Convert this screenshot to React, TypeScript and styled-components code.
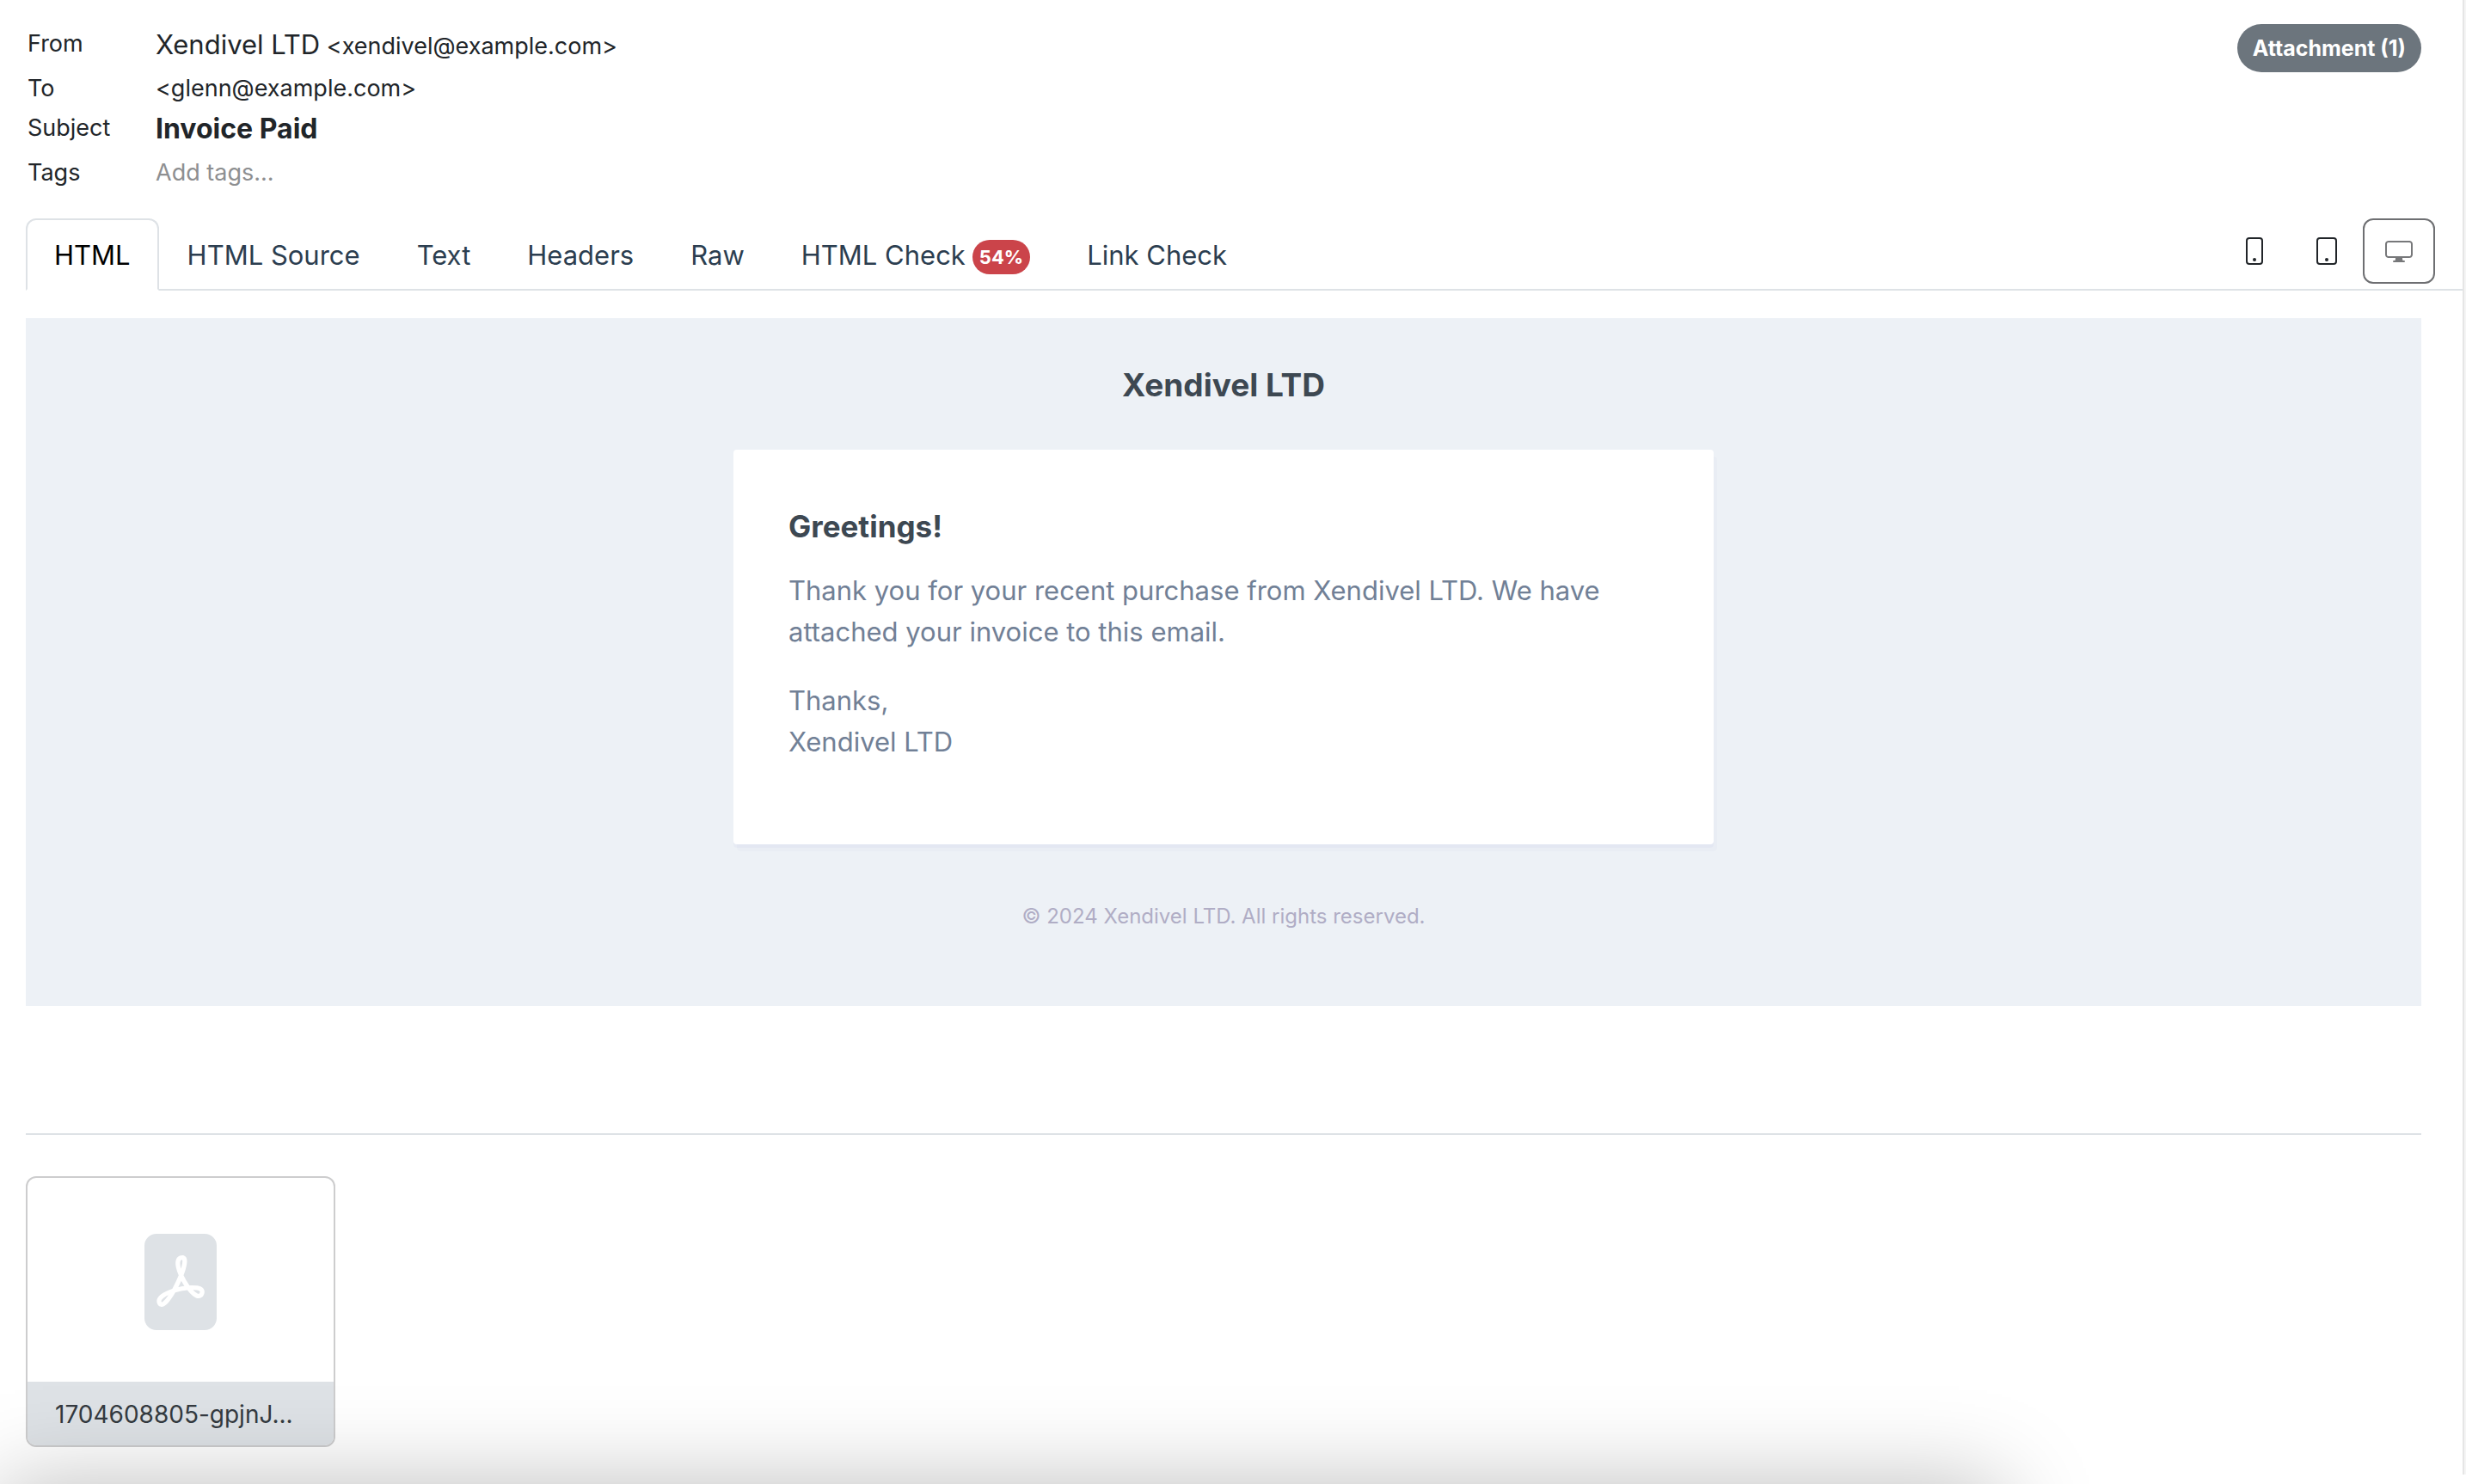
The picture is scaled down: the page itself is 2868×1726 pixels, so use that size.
import React from "react";
import styled, { createGlobalStyle } from "styled-components";
import { BsDisplay, BsFilePdfFill, BsPhone, BsTablet } from "react-icons/bs";

const GlobalStyle = createGlobalStyle`
  *, *::before, *::after { box-sizing: border-box; }
  body {
    margin: 0;
    background: #fff;
    color: #212529;
    font-family: Inter, "Liberation Sans", sans-serif;
    font-size: 27px;
    line-height: 42px;
    overflow: hidden;
  }
`;

const Page = styled.main`
  min-height: 1715px;
  padding: 28px 0 0 30px;
  border-right: 2px solid #e6e6e6;
  margin-right: 2px;
  box-shadow: 2px 0 0 #f5f5f5;
`;

const Inset = styled.div`
  margin-right: 48px;
`;

const Header = styled(Inset)`
  display: flex;
  justify-content: space-between;
  align-items: flex-start;
`;

const Details = styled.table`
  border-collapse: collapse;
  margin: 2px 0 28px;

  th, td {
    padding: 0;
    vertical-align: top;
    text-align: left;
  }
  th {
    width: 151px;
    padding-left: 2px;
    font-weight: 400;
  }
`;

const DetailRow = styled.tr<{ $height: number; $large?: boolean }>`
  height: ${(p) => p.$height}px;

  td { line-height: ${(p) => (p.$large ? 44 : 42)}px; }
`;

const SenderName = styled.span`
  font-size: 31px;
`;

const Subject = styled.strong`
  font-size: 32px;
  font-weight: 700;
`;

const TagInput = styled.input`
  display: block;
  width: 400px;
  height: 42px;
  padding: 0;
  border: 0;
  outline: 0;
  background: transparent;
  font: inherit;
  &::placeholder { color: #8e8f91; opacity: 1; }
`;

const AttachmentBadge = styled.button`
  height: 56px;
  padding: 0 18px;
  border: 0;
  border-radius: 28px;
  background: #6c757d;
  color: #fff;
  font: 700 25px/56px Inter, sans-serif;
`;

const TabBar = styled.nav`
  display: flex;
  justify-content: space-between;
  border-bottom: 2px solid #dee2e6;
`;

const TabList = styled.div`
  display: flex;
  margin-bottom: -2px;
`;

const Tab = styled.button<{ $active?: boolean }>`
  display: flex;
  align-items: center;
  gap: 8px;
  height: 84px;
  padding: 2px 31px 0;
  border: 2px solid ${(p) => (p.$active ? "#dee2e6" : "transparent")};
  border-bottom-color: ${(p) => (p.$active ? "#fff" : "transparent")};
  border-radius: 12px 12px 0 0;
  background: ${(p) => (p.$active ? "#fff" : "transparent")};
  color: ${(p) => (p.$active ? "#000" : "#2c3e50")};
  font: 400 31px/48px Inter, sans-serif;
`;

const ScoreBadge = styled.span`
  height: 40px;
  padding: 0 8px;
  margin-top: 4px;
  border-radius: 20px;
  background: #cb444a;
  color: #fff;
  font: 700 22px/40px Inter, sans-serif;
`;

const Devices = styled.div`
  display: flex;
  margin-right: 32px;
`;

const DeviceButton = styled.button<{ $active?: boolean }>`
  display: flex;
  align-items: center;
  justify-content: center;
  width: 84px;
  height: 76px;
  padding: 0;
  border: 2px solid ${(p) => (p.$active ? "#6e6f72" : "transparent")};
  border-radius: 12px;
  background: transparent;
  color: ${(p) => (p.$active ? "#77787a" : "#212529")};
  font-size: 32px;
`;

const Mail = styled(Inset)`
  display: flex;
  flex-direction: column;
  align-items: center;
  margin-top: 32px;
  background: #edf1f6;
`;

const MailTitle = styled.h1`
  margin: 50px 0 47px;
  color: #3d4852;
  font-size: 37px;
  line-height: 56px;
`;

const MailCard = styled.article`
  width: 1140px;
  max-width: 100%;
  padding: 62px 64px 63px;
  border-radius: 4px;
  background: #fff;
  box-shadow: 0 4px 0 rgba(0, 0, 150, 0.025), 4px 8px 0 rgba(0, 0, 150, 0.015);
  color: #718096;
  font-size: 31px;
  line-height: 48px;

  p { margin: 0 0 32px; }
`;

const Greeting = styled.h2`
  margin: 0 0 24px;
  color: #3d4852;
  font-size: 35px;
  line-height: 54px;
`;

const MailFooter = styled.footer`
  padding: 66px 0 86px;
  color: #b0adc5;
  font-size: 24px;
  line-height: 36px;
`;

const Attachments = styled(Inset)`
  margin-top: 148px;
  padding-top: 48px;
  border-top: 2px solid #dee2e6;
`;

const FileCard = styled.a`
  display: block;
  width: 360px;
  border: 2px solid #cdcdce;
  border-radius: 12px;
  overflow: hidden;
  color: #343a40;
  text-decoration: none;
`;

const FilePreview = styled.div`
  display: flex;
  align-items: center;
  justify-content: center;
  height: 237px;
  padding-top: 4px;
  color: #dee2e6;
  font-size: 112px;
`;

const FileName = styled.div`
  padding: 17px 32px 15px;
  background: #dee2e6;
  font-size: 28px;
`;

/* Soft shadow cast by the window that sits just under the viewport. */
const WindowShadow = styled.div`
  position: fixed;
  left: 0;
  right: 540px;
  top: 100%;
  height: 400px;
  box-shadow: 0 0 100px 0 rgba(0, 0, 0, 0.26);
  pointer-events: none;
`;

const tabs = ["HTML", "HTML Source", "Text", "Headers", "Raw", "HTML Check", "Link Check"];

export default function App() {
  return (
    <>
      <GlobalStyle />
      <Page>
        <Header>
          <Details>
            <tbody>
              <DetailRow $height={52} $large>
                <th scope="row">From</th>
                <td><SenderName>Xendivel LTD</SenderName> &lt;xendivel@example.com&gt;</td>
              </DetailRow>
              <DetailRow $height={46}>
                <th scope="row">To</th>
                <td>&lt;glenn@example.com&gt;</td>
              </DetailRow>
              <DetailRow $height={52} $large>
                <th scope="row">Subject</th>
                <td><Subject>Invoice Paid</Subject></td>
              </DetailRow>
              <DetailRow $height={46}>
                <th scope="row"><label htmlFor="tags">Tags</label></th>
                <td><TagInput id="tags" placeholder="Add tags..." /></td>
              </DetailRow>
            </tbody>
          </Details>
          <AttachmentBadge type="button">Attachment (1)</AttachmentBadge>
        </Header>

        <TabBar>
          <TabList role="tablist">
            {tabs.map((name, i) => (
              <Tab key={name} type="button" role="tab" aria-selected={i === 0} $active={i === 0}>
                {name}
                {name === "HTML Check" && <ScoreBadge>54%</ScoreBadge>}
              </Tab>
            ))}
          </TabList>
          <Devices>
            <DeviceButton type="button" aria-label="Phone"><BsPhone /></DeviceButton>
            <DeviceButton type="button" aria-label="Tablet"><BsTablet /></DeviceButton>
            <DeviceButton type="button" aria-label="Desktop" $active><BsDisplay /></DeviceButton>
          </Devices>
        </TabBar>

        <Mail>
          <MailTitle>Xendivel LTD</MailTitle>
          <MailCard>
            <Greeting>Greetings!</Greeting>
            <p>Thank you for your recent purchase from Xendivel LTD. We have attached your invoice to this email.</p>
            <p>Thanks,<br />Xendivel LTD</p>
          </MailCard>
          <MailFooter>© 2024 Xendivel LTD. All rights reserved.</MailFooter>
        </Mail>

        <Attachments>
          <FileCard href="#attachment">
            <FilePreview><BsFilePdfFill /></FilePreview>
            <FileName>1704608805-gpjnJ...</FileName>
          </FileCard>
        </Attachments>
      </Page>
      <WindowShadow />
    </>
  );
}
